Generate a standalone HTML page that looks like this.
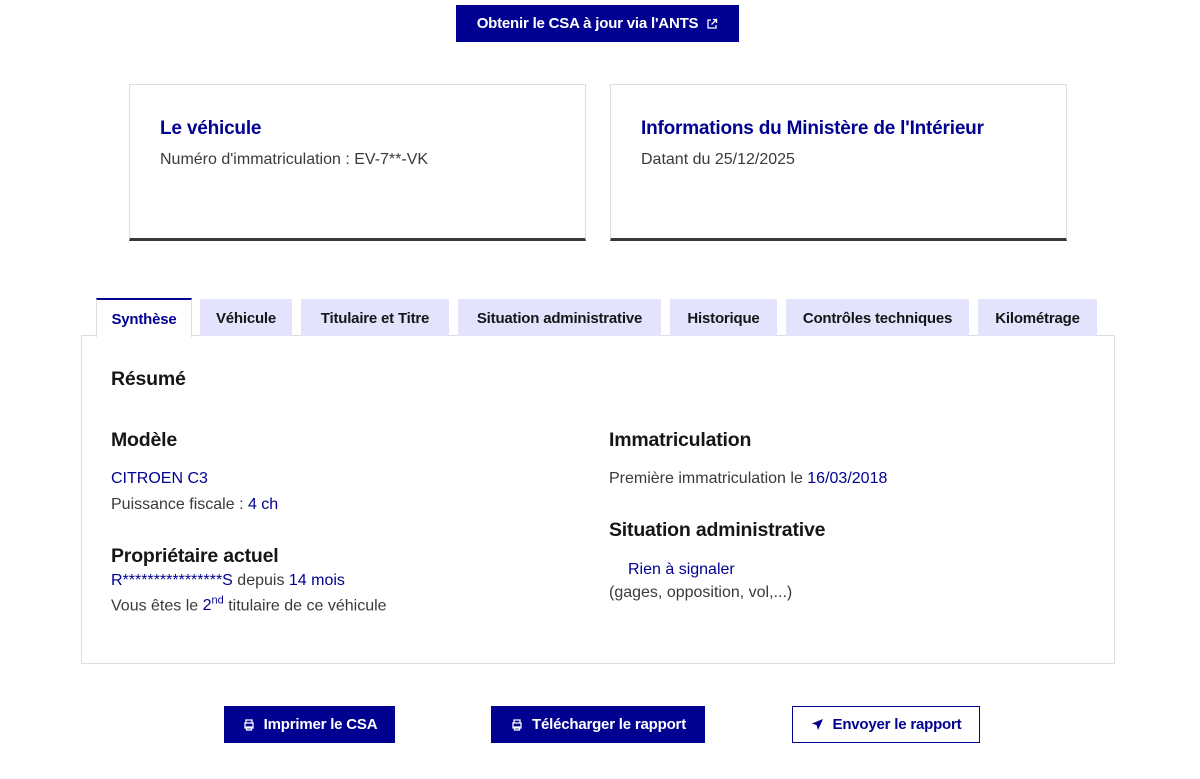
<!DOCTYPE html>
<html><head><meta charset="utf-8"><style>
*{box-sizing:border-box;margin:0;padding:0}
body{width:1200px;height:779px;background:#fff;font-family:"Liberation Sans",sans-serif;color:#3a3a3a;position:relative;overflow:hidden}
.btn{position:absolute;background:#000091;color:#fff;font-weight:bold;font-size:15px;display:flex;align-items:center;justify-content:center;letter-spacing:-0.2px}
.card{position:absolute;top:84px;height:157px;width:457px;border:1px solid #ddd;border-bottom:3px solid #3a3a3a}
.card h3{position:absolute;left:30px;top:33px;font-size:19px;color:#000091;letter-spacing:-0.2px;white-space:nowrap}
.card p{position:absolute;left:30px;top:66px;font-size:16px;white-space:nowrap}
.tab{position:absolute;top:299px;height:37px;background:#e3e3fd;color:#161616;font-weight:bold;font-size:15px;display:flex;align-items:center;justify-content:center;letter-spacing:-0.2px;padding-top:2px}
.b{color:#000091}
h4{position:absolute;font-size:19.5px;color:#161616;white-space:nowrap;letter-spacing:-0.2px}
.t{position:absolute;font-size:16px;white-space:nowrap}
</style></head><body>
<div class="btn" style="left:456px;top:5px;width:283px;height:37px">Obtenir le CSA à jour via l'ANTS&nbsp;<svg width="12" height="12" viewBox="0 0 12 12" style="margin-left:4px"><path d="M5 2H2v8h8V7M7 1.5h3.5V5M10.5 1.5L5.5 6.5" stroke="#fff" stroke-width="1.3" fill="none"/></svg></div>
<div class="card" style="left:129px"><h3>Le véhicule</h3><p>Numéro d'immatriculation : EV-7**-VK</p></div>
<div class="card" style="left:610px"><h3>Informations du Ministère de l'Intérieur</h3><p>Datant du 25/12/2025</p></div>
<div style="position:absolute;left:81px;top:335px;width:1034px;height:329px;border:1px solid #ddd"></div>
<div class="tab" style="left:96px;width:96px;top:298px;height:39px;background:#fff;border:1px solid #ddd;border-top:2px solid #000091;border-bottom:none;color:#000091">Synthèse</div>
<div class="tab" style="left:200px;width:92px">Véhicule</div>
<div class="tab" style="left:301px;width:148px">Titulaire et Titre</div>
<div class="tab" style="left:458px;width:203px">Situation administrative</div>
<div class="tab" style="left:670px;width:107px">Historique</div>
<div class="tab" style="left:786px;width:183px">Contrôles techniques</div>
<div class="tab" style="left:978px;width:119px">Kilométrage</div>
<h4 style="left:111px;top:368px">Résumé</h4>
<h4 style="left:111px;top:429px">Modèle</h4>
<div class="t b" style="left:111px;top:470px">CITROEN C3</div>
<div class="t" style="left:111px;top:496px">Puissance fiscale : <span class="b">4 ch</span></div>
<h4 style="left:111px;top:545px">Propriétaire actuel</h4>
<div class="t" style="left:111px;top:572px"><span class="b">R****************S</span> depuis <span class="b">14 mois</span></div>
<div class="t" style="left:111px;top:595px">Vous êtes le <span class="b">2<sup style="font-size:11px">nd</sup></span> titulaire de ce véhicule</div>
<h4 style="left:609px;top:429px">Immatriculation</h4>
<div class="t" style="left:609px;top:470px">Première immatriculation le <span class="b">16/03/2018</span></div>
<h4 style="left:609px;top:519px">Situation administrative</h4>
<div class="t b" style="left:628px;top:561px">Rien à signaler</div>
<div class="t" style="left:609px;top:584px">(gages, opposition, vol,...)</div>
<div class="btn" style="left:224px;top:706px;width:171px;height:37px"><svg width="14" height="14" viewBox="0 0 14 14" style="margin-right:8px"><path d="M4 5V2h6v3M3 5h8v5H3zM4.5 9h5v3h-5z" stroke="#fff" stroke-width="1.3" fill="none"/></svg>Imprimer le CSA</div>
<div class="btn" style="left:491px;top:706px;width:214px;height:37px"><svg width="14" height="14" viewBox="0 0 14 14" style="margin-right:8px"><path d="M4 5V2h6v3M3 5h8v5H3zM4.5 9h5v3h-5z" stroke="#fff" stroke-width="1.3" fill="none"/></svg>Télécharger le rapport</div>
<div class="btn" style="left:792px;top:706px;width:188px;height:37px;background:#fff;color:#000091;border:1px solid #000091"><svg width="13" height="13" viewBox="0 0 13 13" style="margin-right:9px"><path d="M12 1L1 5.5l4.5 1.5L7 12z" fill="#000091"/></svg>Envoyer le rapport</div>
</body></html>
